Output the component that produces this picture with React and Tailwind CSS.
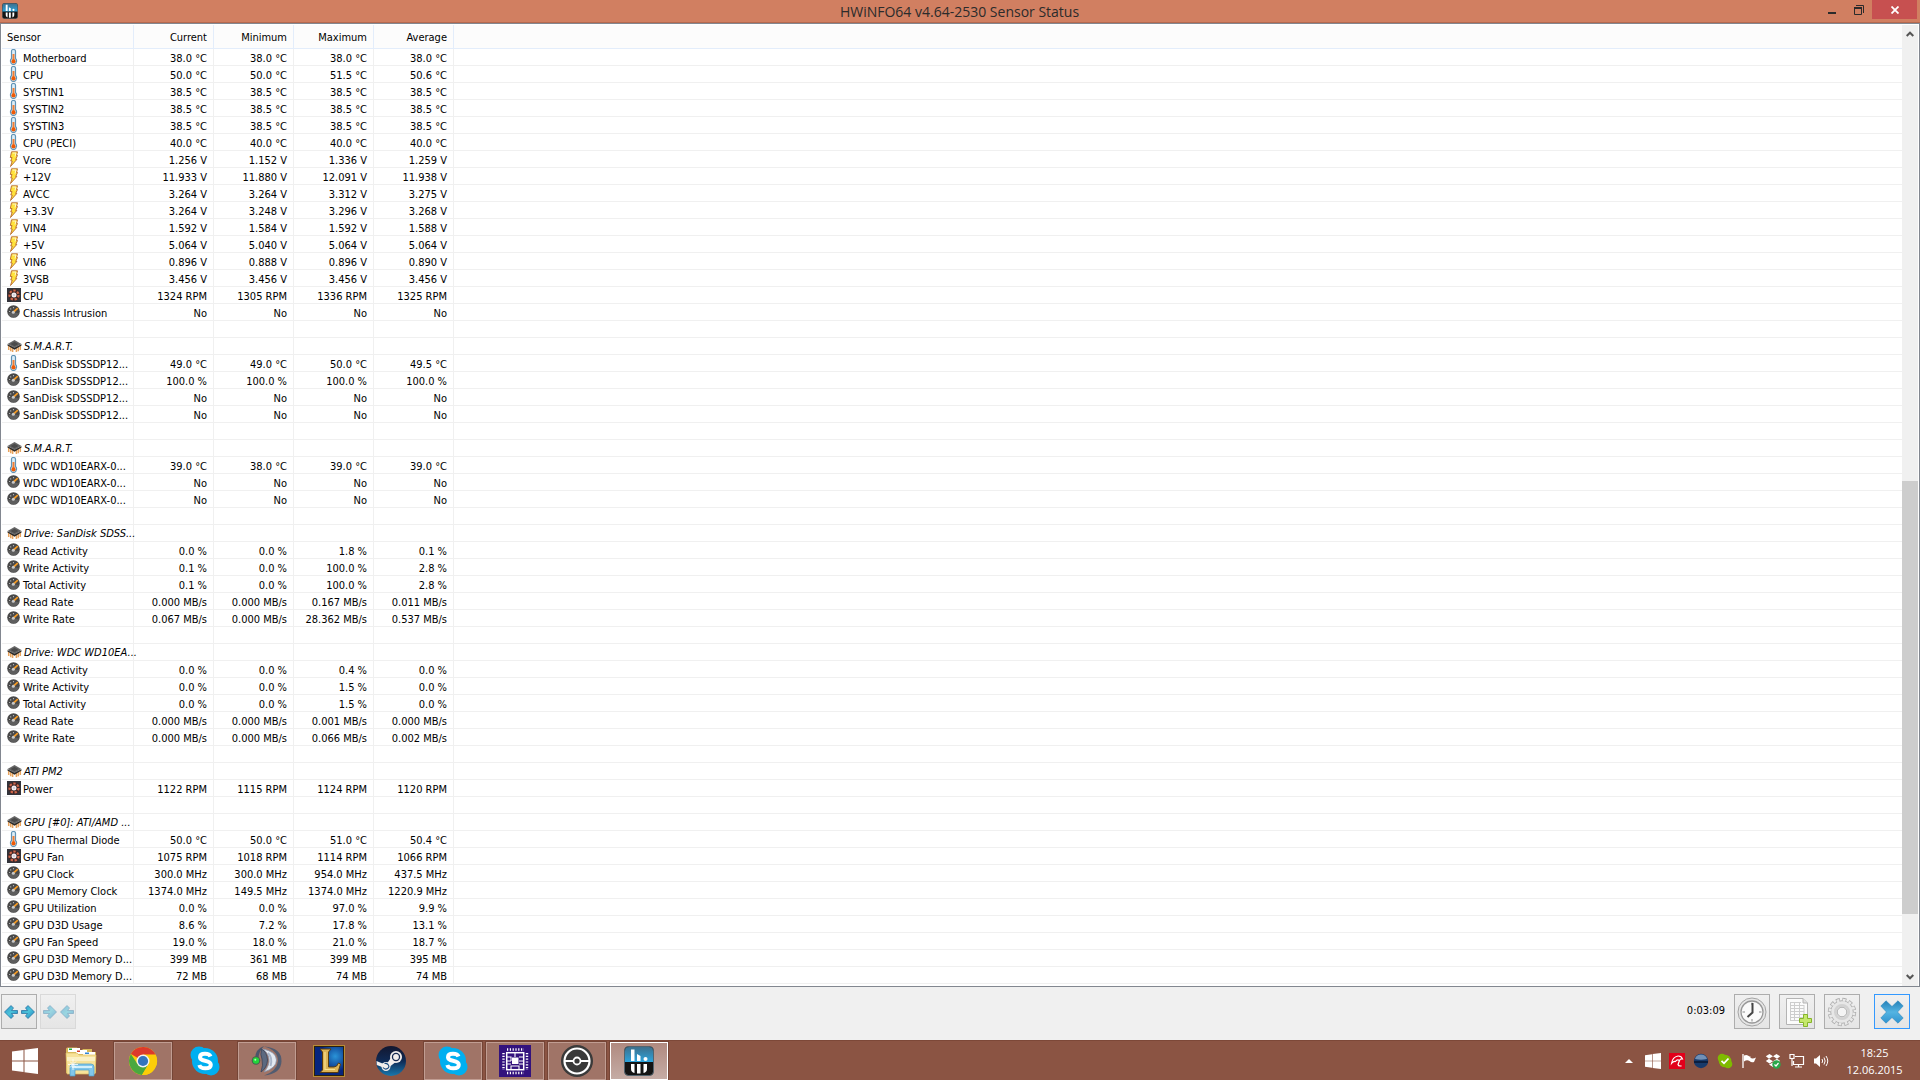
const SENSORS = [
  ["temp", "Motherboard", "38.0 °C", "38.0 °C", "38.0 °C", "38.0 °C"],
  ["temp", "CPU", "50.0 °C", "50.0 °C", "51.5 °C", "50.6 °C"],
  ["temp", "SYSTIN1", "38.5 °C", "38.5 °C", "38.5 °C", "38.5 °C"],
  ["temp", "SYSTIN2", "38.5 °C", "38.5 °C", "38.5 °C", "38.5 °C"],
  ["temp", "SYSTIN3", "38.5 °C", "38.5 °C", "38.5 °C", "38.5 °C"],
  ["temp", "CPU (PECI)", "40.0 °C", "40.0 °C", "40.0 °C", "40.0 °C"],
  ["volt", "Vcore", "1.256 V", "1.152 V", "1.336 V", "1.259 V"],
  ["volt", "+12V", "11.933 V", "11.880 V", "12.091 V", "11.938 V"],
  ["volt", "AVCC", "3.264 V", "3.264 V", "3.312 V", "3.275 V"],
  ["volt", "+3.3V", "3.264 V", "3.248 V", "3.296 V", "3.268 V"],
  ["volt", "VIN4", "1.592 V", "1.584 V", "1.592 V", "1.588 V"],
  ["volt", "+5V", "5.064 V", "5.040 V", "5.064 V", "5.064 V"],
  ["volt", "VIN6", "0.896 V", "0.888 V", "0.896 V", "0.890 V"],
  ["volt", "3VSB", "3.456 V", "3.456 V", "3.456 V", "3.456 V"],
  ["fan", "CPU", "1324 RPM", "1305 RPM", "1336 RPM", "1325 RPM"],
  ["gauge", "Chassis Intrusion", "No", "No", "No", "No"],
  [],
  ["chip", "S.M.A.R.T."],
  ["temp", "SanDisk SDSSDP12...", "49.0 °C", "49.0 °C", "50.0 °C", "49.5 °C"],
  ["gauge", "SanDisk SDSSDP12...", "100.0 %", "100.0 %", "100.0 %", "100.0 %"],
  ["gauge", "SanDisk SDSSDP12...", "No", "No", "No", "No"],
  ["gauge", "SanDisk SDSSDP12...", "No", "No", "No", "No"],
  [],
  ["chip", "S.M.A.R.T."],
  ["temp", "WDC WD10EARX-0...", "39.0 °C", "38.0 °C", "39.0 °C", "39.0 °C"],
  ["gauge", "WDC WD10EARX-0...", "No", "No", "No", "No"],
  ["gauge", "WDC WD10EARX-0...", "No", "No", "No", "No"],
  [],
  ["chip", "Drive: SanDisk SDSS..."],
  ["gauge", "Read Activity", "0.0 %", "0.0 %", "1.8 %", "0.1 %"],
  ["gauge", "Write Activity", "0.1 %", "0.0 %", "100.0 %", "2.8 %"],
  ["gauge", "Total Activity", "0.1 %", "0.0 %", "100.0 %", "2.8 %"],
  ["gauge", "Read Rate", "0.000 MB/s", "0.000 MB/s", "0.167 MB/s", "0.011 MB/s"],
  ["gauge", "Write Rate", "0.067 MB/s", "0.000 MB/s", "28.362 MB/s", "0.537 MB/s"],
  [],
  ["chip", "Drive: WDC WD10EA..."],
  ["gauge", "Read Activity", "0.0 %", "0.0 %", "0.4 %", "0.0 %"],
  ["gauge", "Write Activity", "0.0 %", "0.0 %", "1.5 %", "0.0 %"],
  ["gauge", "Total Activity", "0.0 %", "0.0 %", "1.5 %", "0.0 %"],
  ["gauge", "Read Rate", "0.000 MB/s", "0.000 MB/s", "0.001 MB/s", "0.000 MB/s"],
  ["gauge", "Write Rate", "0.000 MB/s", "0.000 MB/s", "0.066 MB/s", "0.002 MB/s"],
  [],
  ["chip", "ATI PM2"],
  ["fan", "Power", "1122 RPM", "1115 RPM", "1124 RPM", "1120 RPM"],
  [],
  ["chip", "GPU [#0]: ATI/AMD ..."],
  ["temp", "GPU Thermal Diode", "50.0 °C", "50.0 °C", "51.0 °C", "50.4 °C"],
  ["fan", "GPU Fan", "1075 RPM", "1018 RPM", "1114 RPM", "1066 RPM"],
  ["gauge", "GPU Clock", "300.0 MHz", "300.0 MHz", "954.0 MHz", "437.5 MHz"],
  ["gauge", "GPU Memory Clock", "1374.0 MHz", "149.5 MHz", "1374.0 MHz", "1220.9 MHz"],
  ["gauge", "GPU Utilization", "0.0 %", "0.0 %", "97.0 %", "9.9 %"],
  ["gauge", "GPU D3D Usage", "8.6 %", "7.2 %", "17.8 %", "13.1 %"],
  ["gauge", "GPU Fan Speed", "19.0 %", "18.0 %", "21.0 %", "18.7 %"],
  ["gauge", "GPU D3D Memory D...", "399 MB", "361 MB", "399 MB", "395 MB"],
  ["gauge", "GPU D3D Memory D...", "72 MB", "68 MB", "74 MB", "74 MB"],
];

const COLUMNS = ["Current", "Minimum", "Maximum", "Average"];

/* ---------- sensor icons ---------- */

function TempIcon() {
  return (
    <svg viewBox="0 0 14 16" className="h-4 w-[14px] shrink-0">
      <path d="M4.5 2Q4.5 .5 6.5 .5T8.5 2V9.500Q9.800 10.700 9.500 12.500Q9 15.500 6.500 15.500T3.500 12.500Q3.200 10.700 4.500 9.500Z" fill="#dceef8" stroke="#5f93b5" strokeWidth="1.200" />
      <path d="M6.500 5V12" stroke="#f07f35" strokeWidth="2" />
      <circle cx="6.500" cy="12.400" r="2.100" fill="#ee5a06" />
    </svg>
  );
}

function VoltIcon() {
  return (
    <svg viewBox="0 0 14 16" className="h-4 w-[14px] shrink-0">
      <path d="M4.500 .8H10.500L9.500 4.500H10.500L8.700 8.500H9.800L3.500 15.500L5.200 10H3.800L5 6.500H3.300Z" fill="#ffe23a" stroke="#b5672f" strokeWidth=".9" />
      <path d="M5.500 2H9L8 5.500" stroke="#fff8c8" fill="none" />
    </svg>
  );
}

function FanIcon() {
  return (
    <svg viewBox="0 0 14 14" className="h-[14px] w-[14px] shrink-0">
      <rect width="14" height="14" fill="#33343b" />
      <circle cx="7" cy="7" r="6" fill="#402827" />
      <circle cx="7" cy="7" r="4.500" fill="none" stroke="#d0674b" strokeWidth="2.200" strokeDasharray="2.300 1.700" />
      <circle cx="7" cy="7" r="2.500" fill="#f3eef0" />
      <circle cx="7" cy="7" r=".9" fill="#c9c3d0" />
    </svg>
  );
}

function GaugeIcon() {
  return (
    <svg viewBox="0 0 14 14" className="h-[14px] w-[14px] shrink-0">
      <circle cx="6.500" cy="6.500" r="6.300" fill="#484848" />
      <path d="M1 8.500Q6.500 6.500 12 8.500Q10.500 12.300 6.500 12.300T1 8.500Z" fill="#5e5e5e" />
      <path d="M2 6.500L3.200 6.500M3.300 3.500L4.200 4.400M6.500 2V3.200" stroke="#b5b5b5" strokeWidth="1.100" />
      <path d="M6.500 7L10.800 3.200" stroke="#f59a23" strokeWidth="1.700" />
      <circle cx="6.300" cy="7.200" r="1.500" fill="#c9c9c9" />
    </svg>
  );
}

function ChipIcon() {
  return (
    <svg viewBox="0 0 15 14" className="h-[14px] w-[15px] shrink-0">
      <path d="M1.700 6V11M3.700 7.500V12.200M5.600 8.500V13M9.400 8.500V13M11.300 7.500V12.200M13.300 6V11" stroke="#e8a35c" strokeWidth="1.500" />
      <path d="M.5 5.200L7.500 8.500L14.500 5.200V6.500L7.500 10.800L.5 6.500Z" fill="#2a2a2a" />
      <path d="M.5 5L7.500 1L14.500 5L7.500 9Z" fill="#666" />
      <path d="M3.500 5L7.500 2.700L11.500 5L7.500 7.300Z" fill="#4a4a4a" />
    </svg>
  );
}

const ICONS = { temp: TempIcon, volt: VoltIcon, fan: FanIcon, gauge: GaugeIcon, chip: ChipIcon };

/* ---------- app icons ---------- */

function HwinfoIcon({ className }) {
  return (
    <svg viewBox="0 0 30 30" className={className}>
      <defs>
        <linearGradient id="hwTop" x1="0" y1="0" x2="0" y2="1">
          <stop offset="0" stopColor="#3c6f8c" />
          <stop offset="1" stopColor="#2da4dc" />
        </linearGradient>
      </defs>
      <rect x=".5" y=".5" width="29" height="29" rx="4" fill="#141414" stroke="#52646e" />
      <path d="M1 16V5Q1 1 5 1H25Q29 1 29 5V16Z" fill="url(#hwTop)" />
      <path d="M7 3.500H10.500V15H7ZM13 8L16.500 10V15H13ZM7 18H10.500V27Q7 26 7 23ZM13 18H16.500V27.500H13ZM19.500 18H23V23Q23 26 19.500 27Z" fill="#fff" />
      <circle cx="21.500" cy="13" r="2" fill="#fff" />
    </svg>
  );
}

function WindowsLogo({ className }) {
  return (
    <svg viewBox="0 0 26 26" className={className} fill="#fff">
      <path d="M0 3.500L11.500 2V12.500H0ZM12.500 1.800L26 0V12.500H12.500ZM0 13.500H11.500V24L0 22.500ZM12.500 13.500H26V26L12.500 24.200Z" />
    </svg>
  );
}

function ExplorerIcon() {
  return (
    <svg viewBox="0 0 32 32" className="h-8 w-8">
      <path d="M1 4Q1 2.500 2.500 2.500H12L14 5H17L18 4H27V7H31V28H1Z" fill="#d8b95a" />
      <path d="M3 3H15V7H3Z" fill="#fff" />
      <path d="M4 3.500H7V5H4Z" fill="#1cab3c" />
      <path d="M11 5H22V9H11Z" fill="#fff" />
      <path d="M12 5.500H15V7H12Z" fill="#d8402a" />
      <path d="M18 7H30V11H18Z" fill="#fff" />
      <path d="M20 7.500H24V9H20Z" fill="#2f86d8" />
      <path d="M1 8H12L14 10H31L30 29H2Z" fill="#f7e29a" stroke="#dcbc62" strokeWidth=".7" />
      <path d="M2 14H30" stroke="#fbf0c4" strokeWidth="4" />
      <path d="M5 31V22Q5 19 8 19H26Q29 19 29 22V31H24V25H10V31Z" fill="#82c7ea" stroke="#4b9cc8" strokeWidth=".7" />
      <path d="M7 22H27" stroke="#d3effb" strokeWidth="2" />
      <path d="M8 14V25M3 19.500H13M5 16.500L11 22.500M11 16.500L5 22.500" stroke="#fff" strokeWidth=".8" />
    </svg>
  );
}

function ChromeIcon() {
  return (
    <svg viewBox="0 0 32 32" className="h-8 w-8">
      <circle cx="16" cy="16" r="14" fill="#fccd08" />
      <path d="M16 16L3.900 9A14 14 0 0 1 28.600 10H16Z" fill="#dc3a2c" />
      <path d="M3.900 9A14 14 0 0 0 15 30L21.500 19L10.500 19Z" fill="#4aa83f" />
      <path d="M16 9.500H28.400A14 14 0 0 1 15 30L21.600 19.300Z" fill="#fccd08" />
      <circle cx="16" cy="16" r="6.500" fill="#f4f4f4" />
      <circle cx="16" cy="16" r="5.100" fill="#3474bd" />
    </svg>
  );
}

function SkypeIcon() {
  return (
    <svg viewBox="0 0 32 32" className="h-8 w-8">
      <circle cx="10" cy="10" r="8.500" fill="#00aff0" />
      <circle cx="22" cy="22" r="8.500" fill="#00aff0" />
      <circle cx="16" cy="16" r="13" fill="#00aff0" />
      <path d="M21.500 11.500Q20.500 8.800 16 8.800Q11 8.800 11 12.200Q11 14.800 16 15.700Q21.800 16.800 21.800 19.800Q21.800 23.300 16.300 23.300Q11.300 23.300 10.300 20" fill="none" stroke="#fff" strokeWidth="4" />
    </svg>
  );
}

function TeamspeakIcon() {
  return (
    <svg viewBox="0 0 32 32" className="h-8 w-8">
      <path d="M13 1.500Q31 3 30.500 16.500Q30 29 13 30.500Q26 26 27 16Q27 5 13 1.500Z" fill="#525c70" />
      <path d="M11 4Q25 6 25.500 15Q25.500 23 13 27Q19 20 18 14Q17 7 11 4Z" fill="#e4e9f1" stroke="#8490a6" strokeWidth=".8" />
      <path d="M17 8Q22 13 19.500 21" fill="none" stroke="#aab6ca" strokeWidth="2" />
      <path d="M13 1Q4 4 4 14L7.500 13Q8 6 13 1Z" fill="#4a556a" />
      <path d="M10.500 4Q9 10 11 14Q12.500 20 10 27Q16 23 16.500 15Q16 7 10.500 4Z" fill="#5c6980" stroke="#39445a" strokeWidth=".8" />
      <circle cx="5" cy="15.500" r="4.300" fill="#47604f" />
      <circle cx="5" cy="15.500" r="3.200" fill="#22d53a" />
      <circle cx="4.300" cy="14.700" r="1" fill="#a7ffb0" />
    </svg>
  );
}

function LeagueIcon() {
  return (
    <svg viewBox="0 0 32 32" className="h-8 w-8">
      <defs>
        <radialGradient id="lolBg" cx=".7" cy=".35">
          <stop offset="0" stopColor="#2a94d8" />
          <stop offset="1" stopColor="#06257d" />
        </radialGradient>
      </defs>
      <rect x=".5" y=".5" width="31" height="31" fill="url(#lolBg)" stroke="#b98c35" />
      <rect x="1.500" y="1.500" width="29" height="29" fill="none" stroke="#2b200d" />
      <path d="M7 4H18L15.500 7V22H21Q24 22 25.500 18L27.500 19L25 27.500H7L9.500 25V7Z" fill="#dcb457" stroke="#5c3c0c" />
      <path d="M12 7V24.500H22" fill="none" stroke="#f8e08f" strokeWidth="1.200" />
    </svg>
  );
}

function SteamIcon() {
  return (
    <svg viewBox="0 0 32 32" className="h-8 w-8">
      <defs>
        <linearGradient id="steamBg" x1="0" y1="0" x2="0" y2="1">
          <stop offset="0" stopColor="#13172f" />
          <stop offset=".5" stopColor="#0f2a55" />
          <stop offset="1" stopColor="#1878ad" />
        </linearGradient>
      </defs>
      <circle cx="16" cy="16" r="15" fill="url(#steamBg)" />
      <path d="M1.500 16L11 20L16.500 12L22 16L13 23Q10 26 7 22L1.800 20Z" fill="#f2eeec" />
      <circle cx="21" cy="12" r="6" fill="#f2eeec" />
      <circle cx="21" cy="12" r="4.200" fill="#152850" />
      <circle cx="21" cy="12" r="2.900" fill="#f2eeec" />
      <circle cx="11" cy="21.500" r="4.500" fill="#f2eeec" />
      <path d="M8 22.500Q10 25 12.500 23.500T13 19.500Q11.500 18 9.500 18.500" fill="none" stroke="#1b4b7d" strokeWidth="1.200" />
    </svg>
  );
}

function ChipAppIcon() {
  return (
    <svg viewBox="0 0 32 32" className="h-8 w-8">
      <rect width="32" height="32" fill="#33127d" />
      <path d="M8 4.500H25M8 28H25" stroke="#fff" strokeWidth="2.400" strokeDasharray="1.200 1.600" />
      <path d="M4.500 8V25M28 8V25" stroke="#fff" strokeWidth="2.400" strokeDasharray="1.200 1.600" />
      <rect x="7.700" y="7.700" width="17" height="17" fill="#33127d" stroke="#fff" strokeWidth="1.500" />
      <path d="M8 12H12V16M24 12H20M8 19H12M24 19H20M16 8V12M12 24V21H20V24M8 16H12M20 16H24" fill="none" stroke="#fff" strokeWidth="1.100" />
      <rect x="13" y="12.500" width="6.500" height="6.500" fill="#fff" />
    </svg>
  );
}

function BallIcon() {
  return (
    <svg viewBox="0 0 32 32" className="h-8 w-8">
      <circle cx="16" cy="16" r="16" fill="#3a3a3a" />
      <circle cx="16" cy="16" r="12.500" fill="none" stroke="#fff" strokeWidth="2.200" />
      <path d="M4 16H28" stroke="#fff" strokeWidth="2" />
      <circle cx="16" cy="16" r="3.500" fill="#3a3a3a" stroke="#fff" strokeWidth="1.800" />
    </svg>
  );
}

const TASKS = [
  { name: "File Explorer", icon: <ExplorerIcon /> },
  { name: "Google Chrome", icon: <ChromeIcon />, open: true },
  { name: "Skype", icon: <SkypeIcon /> },
  { name: "TeamSpeak", icon: <TeamspeakIcon />, open: true },
  { name: "League of Legends", icon: <LeagueIcon /> },
  { name: "Steam", icon: <SteamIcon /> },
  { name: "Skype call", icon: <SkypeIcon />, open: true },
  { name: "CPU-Z", icon: <ChipAppIcon />, open: true },
  { name: "Ball", icon: <BallIcon />, open: true },
  { name: "HWiNFO64", icon: <HwinfoIcon className="h-[30px] w-[30px]" />, active: true },
];

/* ---------- window parts ---------- */

function TitleBar() {
  return (
    <header className="flex h-[23px] shrink-0 items-start border-b border-[#b5694f] bg-[#d17f61]">
      <div className="flex flex-1 pt-[3px] pl-[2px]">
        <HwinfoIcon className="h-4 w-4" />
      </div>
      <h1 className="font-['Open_Sans',sans-serif] text-[14px] leading-[23px] text-[#2b2b2b]">HWiNFO64 v4.64-2530 Sensor Status</h1>
      <div className="flex flex-1 justify-end pr-[3px]">
        <button aria-label="Minimize" className="flex h-[19px] w-[26px] items-center justify-center">
          <svg viewBox="0 0 10 10" className="h-[10px] w-[10px]"><path d="M1 7H9V9H1Z" fill="#2b2b2b" /></svg>
        </button>
        <button aria-label="Restore" className="flex h-[19px] w-[27px] items-center justify-center">
          <svg viewBox="0 0 10 10" className="h-[10px] w-[10px]" fill="none" stroke="#2b2b2b">
            <path d="M.5 2.500H7.500V9.500H.5Z" />
            <path d="M0 3H8" strokeWidth="2" />
            <path d="M2 .5H9.500V8" />
          </svg>
        </button>
        <button aria-label="Close" className="flex h-[19px] w-[45px] items-center justify-center bg-[#c75050]">
          <svg viewBox="0 0 8 8" className="h-2 w-2"><path d="M.5 .5L7.500 7.500M7.500 .5L.5 7.500" stroke="#fff" strokeWidth="1.800" /></svg>
        </button>
      </div>
    </header>
  );
}

function SensorRow({ row }) {
  const [type, label, ...values] = row;
  const Icon = ICONS[type];
  return (
    <tr className="h-[17px]">
      <td className="h-[17px] border-r border-b border-[#f0f0f0] p-0">
        <div className="flex h-4 items-center gap-[2px] pl-[5px]">
          {Icon && <Icon />}
          <span className={type === "chip" ? "pt-[2px] whitespace-nowrap italic" : "pt-1 whitespace-nowrap"}>{label}</span>
        </div>
      </td>
      {COLUMNS.map((col, i) => (
        <td key={col} className="border-r border-b border-[#f0f0f0] pt-1 pr-[6px] pb-0 pl-0 text-right whitespace-nowrap">{values[i]}</td>
      ))}
      <td className="border-b border-[#f0f0f0] p-0"></td>
    </tr>
  );
}

function ScrollArrow({ up }) {
  return (
    <button aria-label={up ? "Scroll up" : "Scroll down"} className="flex h-[18px] w-full shrink-0 items-center justify-center">
      <svg viewBox="0 0 8 6" className="h-[6px] w-2">
        <path d={up ? "M.7 5L4 1.700L7.300 5" : "M.7 1L4 4.300L7.300 1"} fill="none" stroke="#555" strokeWidth="2" />
      </svg>
    </button>
  );
}

function SensorList() {
  return (
    <main className="flex min-h-0 flex-1 overflow-hidden border border-[#828790] bg-white pt-px pl-px">
      <div className="min-w-0 flex-1 overflow-hidden">
        <table className="w-full table-fixed border-separate border-spacing-0 font-['DejaVu_Sans_Condensed','DejaVu_Sans',sans-serif] text-[11px] leading-3 text-black">
          <colgroup>
            <col className="w-[132px]" />
            <col className="w-[80px]" />
            <col className="w-[80px]" />
            <col className="w-[80px]" />
            <col className="w-[80px]" />
            <col />
          </colgroup>
          <thead>
            <tr className="h-6 bg-[#fcfcfc]">
              <th className="border-r border-b border-[#e3edfb] pt-[2px] pr-0 pb-0 pl-[5px] text-left font-normal">Sensor</th>
              {COLUMNS.map((col) => (
                <th key={col} className="border-r border-b border-[#e3edfb] pt-[2px] pr-[6px] pb-0 pl-0 text-right font-normal">{col}</th>
              ))}
              <th className="border-b border-[#e3edfb] p-0"></th>
            </tr>
          </thead>
          <tbody>
            {SENSORS.map((row, i) => <SensorRow key={i} row={row} />)}
          </tbody>
        </table>
      </div>
      <div className="mr-px flex w-4 shrink-0 flex-col bg-[#f0f0f0]">
        <ScrollArrow up />
        <div className="flex flex-1 flex-col">
          <div className="flex-[438]"></div>
          <div className="flex-[432] bg-[#cdcdcd]"></div>
          <div className="flex-[54]"></div>
        </div>
        <ScrollArrow />
      </div>
    </main>
  );
}

function ToolButton({ label, className = "border-[#adadad]", disabled, children }) {
  return (
    <button
      aria-label={label}
      disabled={disabled}
      className={`flex h-[35px] w-9 items-center justify-center border bg-linear-to-b from-[#f0f0f0] to-[#e5e5e5] ${className}`}
    >
      {children}
    </button>
  );
}

function ArrowPair({ inward }) {
  const left = "M.5 8L7 1.500L9.500 4L7.500 6.500H13.500V9.500H7.500L9.500 12L7 14.500Z";
  const right = "M13.500 8L7 1.500L4.500 4L6.500 6.500H.5V9.500H6.500L4.500 12L7 14.500Z";
  return (
    <svg viewBox="0 0 32 16" className={inward ? "h-4 w-8 opacity-50" : "h-4 w-8"}>
      <defs>
        <linearGradient id="arrowFill" x1="0" y1="0" x2="1" y2="1">
          <stop offset="0" stopColor="#2c8fc9" />
          <stop offset=".5" stopColor="#4cc3d9" />
          <stop offset="1" stopColor="#1f7fc0" />
        </linearGradient>
      </defs>
      <g fill="url(#arrowFill)" stroke="#1c6a9c" strokeWidth=".7">
        <path d={inward ? right : left} transform="translate(1 0)" />
        <path d={inward ? left : right} transform="translate(18 0)" />
      </g>
    </svg>
  );
}

function Toolbar() {
  return (
    <section className="flex h-[53px] shrink-0 items-start bg-[#f0f0f0] px-px pt-[7px]">
      <div className="flex gap-[3px]">
        <ToolButton label="Expand columns"><ArrowPair /></ToolButton>
        <ToolButton label="Shrink columns" disabled className="border-[#d9d9d9]"><ArrowPair inward /></ToolButton>
      </div>
      <div className="ml-auto flex gap-[9px] pr-[9px]">
        <span className="font-['DejaVu_Sans_Condensed','DejaVu_Sans',sans-serif] text-[11px] leading-[33px] text-black">0:03:09</span>
        <ToolButton label="Reset clock">
          <svg viewBox="0 0 30 30" className="h-[30px] w-[30px]">
            <circle cx="15" cy="15" r="14" fill="#e6e6e6" stroke="#a4a4a4" />
            <circle cx="15" cy="15" r="11" fill="#fafafa" stroke="#989898" strokeWidth="1.300" />
            <path d="M15 5.500V8M15 22V24.500M5.500 15H8M22 15H24.500" stroke="#8a8a8a" />
            <path d="M15.500 6V15.500L10.500 20" fill="none" stroke="#444" strokeWidth="2" />
          </svg>
        </ToolButton>
        <ToolButton label="Start logging">
          <svg viewBox="0 0 30 30" className="h-[30px] w-[30px]">
            <path d="M4.500 1.500H21L25.500 6V27.500H4.500Z" fill="#fbfbfb" stroke="#b4b4b4" />
            <path d="M21 1.500V6H25.500" fill="#e1e1e1" stroke="#b4b4b4" />
            <path d="M8 5.500H19M8 8.500H22M8 11.500H22M8 14.500H22M8 17.500H22M8 20.500H22M8 23.500H20M8.500 5V24M12.500 5V24M17.500 5V24M22 8V20" stroke="#cdcdcd" />
            <path d="M21.500 17.500H25.500V21.500H29.500V25.500H25.500V29.500H21.500V25.500H17.500V21.500H21.500Z" fill="#c5e86c" stroke="#86b52b" />
          </svg>
        </ToolButton>
        <ToolButton label="Settings">
          <svg viewBox="0 0 30 30" className="h-[30px] w-[30px]">
            <circle cx="15" cy="15" r="12.400" fill="none" stroke="#adadad" strokeWidth="3.600" strokeDasharray="4 2.493" />
            <circle cx="15" cy="15" r="11.300" fill="#e7e7e7" stroke="#b2b2b2" />
            <circle cx="15" cy="15" r="12" fill="none" stroke="#e9e9e9" strokeWidth="2.800" strokeDasharray="2.600 3.683" strokeDashoffset="-.6" />
            <circle cx="15" cy="15" r="6.800" fill="none" stroke="#d2d2d2" strokeWidth="2.500" />
            <circle cx="15" cy="15" r="4.800" fill="#f4f4f4" stroke="#b0b0b0" />
          </svg>
        </ToolButton>
        <ToolButton label="Close sensors" className="ml-[5px] border-[#3399ff]">
          <svg viewBox="0 0 24 24" className="h-6 w-6">
            <defs>
              <linearGradient id="closeFill" x1="0" y1="0" x2="0" y2="1">
                <stop offset="0" stopColor="#2480b8" />
                <stop offset=".5" stopColor="#54b4e2" />
                <stop offset="1" stopColor="#3093cf" />
              </linearGradient>
            </defs>
            <path d="M6 .8L12 6.500L18 .8L23.200 6L17.500 12L23.200 18L18 23.200L12 17.500L6 23.200L.8 18L6.500 12L.8 6Z" fill="url(#closeFill)" stroke="#2b86bd" strokeWidth=".6" />
          </svg>
        </ToolButton>
      </div>
    </section>
  );
}

function TaskButton({ task }) {
  let look = "border-transparent";
  if (task.open) look = "border-[#c19d92] bg-[#a07467] outline outline-[#754536]";
  if (task.active) look = "border-white bg-linear-to-b from-[#b08a80] to-[#c5aca5] outline outline-[#754536]";
  return (
    <button aria-label={task.name} className={`flex h-[38px] w-[58px] items-center justify-center border ${look}`}>
      {task.icon}
    </button>
  );
}

function Tray() {
  return (
    <div className="flex items-center gap-2">
      <button aria-label="Show hidden icons" className="flex h-4 w-4 items-center justify-center">
        <svg viewBox="0 0 8 4" className="h-1 w-2"><path d="M4 0L8 4H0Z" fill="#fff" /></svg>
      </button>
      <WindowsLogo className="h-4 w-4" />
      <svg viewBox="0 0 16 16" className="h-4 w-4">
        <rect width="16" height="16" fill="#e2001a" />
        <path d="M2.500 10.500Q3.500 4 9 3Q12.500 2.800 13.500 6Q11.500 5.500 10.500 7.500Q8 6 6.500 8.500Q4.500 8 2.500 10.500Z" fill="none" stroke="#fff" strokeWidth="1.100" />
        <path d="M10.500 7.500L9 11.500Q9.500 13.500 12.500 12.800" fill="none" stroke="#fff" strokeWidth="1.200" />
      </svg>
      <svg viewBox="0 0 16 16" className="h-4 w-4">
        <circle cx="8" cy="8" r="7.200" fill="#173a6b" />
        <path d="M2 6Q3 1.500 8 1.500T14 6Q8 7.500 2 6Z" fill="#7190b5" />
        <path d="M1 9H15" stroke="#0b1f40" strokeWidth="2" />
      </svg>
      <svg viewBox="0 0 16 16" className="h-4 w-4">
        <circle cx="5" cy="5" r="4.300" fill="#7fba00" />
        <circle cx="11" cy="11" r="4.300" fill="#7fba00" />
        <circle cx="8" cy="8" r="6.300" fill="#7fba00" />
        <path d="M4.500 7.800L7 10.300L11.500 5.500" fill="none" stroke="#fff" strokeWidth="1.800" />
      </svg>
      <svg viewBox="0 0 16 16" className="h-4 w-4">
        <path d="M2 1V15" stroke="#fff" strokeWidth="1.300" />
        <path d="M3 2.500Q6 1 8.500 3.500H9.500V5Q12 6 15 4.500L13 9Q10.500 10 8.500 8Q6 6.500 3 8.500Z" fill="#fff" />
      </svg>
      <svg viewBox="0 0 16 16" className="h-4 w-4">
        <path d="M4.500 1L8 3.200L4 5.700L.8 3.300ZM11.500 1L8 3.200L12 5.700L15.200 3.300ZM.8 8L4 5.700L8 8.200L4.500 10.500ZM15.200 8L12 5.700L8 8.200L11.500 10.500ZM4 11.500L8 9.500L12 11.500L8 14Z" fill="#fff" />
        <circle cx="11.500" cy="11.500" r="4.200" fill="#2aa84a" />
        <path d="M9.500 11.500L11 13L13.500 10" fill="none" stroke="#fff" strokeWidth="1.200" />
      </svg>
      <svg viewBox="0 0 16 16" className="h-4 w-4" fill="none" stroke="#fff" strokeWidth="1.200">
        <path d="M6 3.500H14.500V11.500H4.500V8M9.500 11.500V14M6 14H13M1 1.500H5V5.500H1ZM3 5.500V13" />
      </svg>
      <svg viewBox="0 0 16 16" className="h-4 w-4">
        <path d="M1 5.500H3L7 2V14L3 10.500H1Z" fill="#fff" />
        <path d="M9 6Q10.300 8 9 10M11 4.500Q13.300 8 11 11.500M13 3Q16.500 8 13 13" fill="none" stroke="#fff" />
      </svg>
    </div>
  );
}

function Taskbar() {
  return (
    <footer className="flex h-10 shrink-0 items-center border-t border-[#7d4838] bg-[#8b5443]">
      <button aria-label="Start" className="flex h-full w-[52px] items-center pl-3">
        <WindowsLogo className="h-[26px] w-[26px]" />
      </button>
      <nav className="flex gap-1">
        {TASKS.map((task) => <TaskButton key={task.name} task={task} />)}
      </nav>
      <div className="ml-auto flex items-center">
        <Tray />
        <div className="w-[91px] text-center font-['Open_Sans',sans-serif] text-[11px] leading-[17px] text-white">
          <div>18:25</div>
          <div>12.06.2015</div>
        </div>
      </div>
    </footer>
  );
}

export default function App() {
  return (
    <div className="flex h-screen flex-col overflow-hidden bg-[#f0f0f0]">
      <TitleBar />
      <SensorList />
      <Toolbar />
      <Taskbar />
    </div>
  );
}
